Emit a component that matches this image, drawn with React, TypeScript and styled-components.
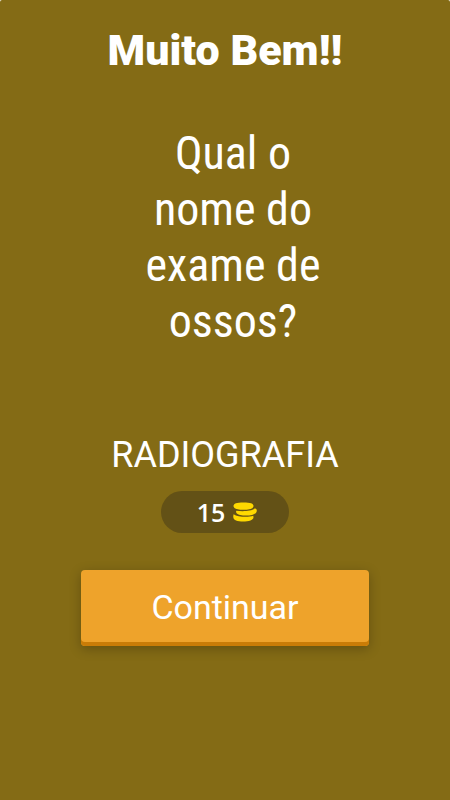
import React from "react";
import styled, { createGlobalStyle } from "styled-components";

const GlobalStyle = createGlobalStyle`
  * { box-sizing: border-box; }
  body { margin: 0; background: #fff; }
`;

const Screen = styled.main`
  min-height: 100vh;
  padding: 20px 24px 24px;
  display: flex;
  flex-direction: column;
  align-items: center;
  border-radius: 2px 2px 0 0;
  background: #846b15;
  color: #fff;
  font-family: Roboto, sans-serif;
  text-align: center;
`;

const Title = styled.h1`
  margin: 0;
  font-size: 43px;
  line-height: 60px;
  font-weight: 900;
`;

const Question = styled.p`
  margin: 45px 0 0 16px;
  max-width: 200px;
  font-family: "Roboto Condensed", Roboto, sans-serif;
  font-size: 46px;
  line-height: 56px;
`;

const Answer = styled.p`
  margin: 84px 0 0;
  font-size: 36px;
  line-height: 44px;
`;

const Reward = styled.div`
  display: flex;
  align-items: center;
  justify-content: center;
  gap: 8px;
  width: 128px;
  height: 42px;
  margin-top: 14px;
  padding-left: 4px;
  border-radius: 21px;
  background: #635116;
  font-family: "Open Sans", sans-serif;
  font-size: 25px;
  font-weight: 600;
  line-height: 40px;
`;

const CoinStack = styled.svg`
  width: 24px;
  height: 20px;
  fill: #ffd900;
`;

const Continue = styled.button`
  width: min(100%, 288px);
  height: 76px;
  margin-top: 37px;
  padding: 0 0 2px;
  border: 0;
  border-radius: 4px;
  background: #eea32b;
  box-shadow: inset 0 -4px #c97c07, 0 3px 12px rgba(0, 0, 0, 0.25);
  color: #fff;
  font-family: Roboto, sans-serif;
  font-size: 34px;
  cursor: pointer;
`;

export default function App() {
  return (
    <>
      <GlobalStyle />
      <Screen>
        <Title>Muito Bem!!</Title>
        <Question>Qual o nome do exame de ossos?</Question>
        <Answer>RADIOGRAFIA</Answer>
        <Reward>
          <span>15</span>
          <CoinStack viewBox="0 0 24 20" aria-hidden="true">
            <path d="M.5 4C.5 1.600 3.500 .5 10.500 .5S20.500 1.600 20.500 4 17.500 7.800 10.500 7.800 .5 6.400 .5 4Z" />
            <path d="M3.300 8.700C9 9.600 18.500 9.300 21.600 6.500 23.500 6.500 24.200 7.800 23.600 9.700 22.500 13 16.500 13.900 10 13.500 5.500 13.200 2.200 11.800 3.300 8.700Z" />
            <path d="M.6 12.200C4.500 15 15 15.500 20.200 13.800 21 16 20.200 17.500 17.500 18.500 13 19.900 6.500 19.700 3 18.500 .3 17.500-.2 15 .6 12.200Z" />
          </CoinStack>
        </Reward>
        <Continue type="button">Continuar</Continue>
      </Screen>
    </>
  );
}
